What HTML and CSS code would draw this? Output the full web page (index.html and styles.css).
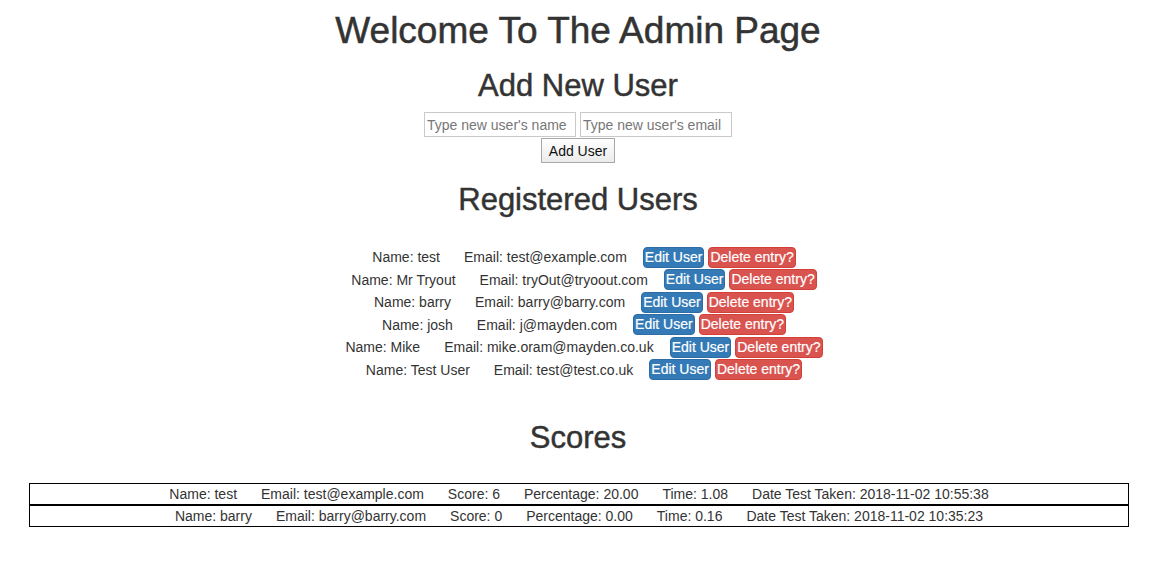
FILE: index.html
```html
<!DOCTYPE html>
<html lang="en">
<head>
<meta charset="utf-8">
<title>Admin Page</title>
<link rel="stylesheet" href="styles.css">
</head>
<body>
<main class="page">
  <h1 class="title">Welcome To The Admin Page</h1>

  <h2 class="heading heading-add">Add New User</h2>
  <form class="add-form">
    <div class="add-inputs">
      <input class="add-input" type="text" placeholder="Type new user's name">
      <input class="add-input" type="text" placeholder="Type new user's email">
    </div>
    <button class="add-btn" type="button">Add User</button>
  </form>

  <h2 class="heading heading-users">Registered Users</h2>
  <div class="users">
    <div class="user-row"><span class="field">Name: test</span><span class="field field-last">Email: test@example.com</span><button class="btn btn-edit" type="button">Edit User</button><button class="btn btn-delete" type="button">Delete entry?</button></div>
    <div class="user-row"><span class="field">Name: Mr Tryout</span><span class="field field-last">Email: tryOut@tryoout.com</span><button class="btn btn-edit" type="button">Edit User</button><button class="btn btn-delete" type="button">Delete entry?</button></div>
    <div class="user-row"><span class="field">Name: barry</span><span class="field field-last">Email: barry@barry.com</span><button class="btn btn-edit" type="button">Edit User</button><button class="btn btn-delete" type="button">Delete entry?</button></div>
    <div class="user-row"><span class="field">Name: josh</span><span class="field field-last">Email: j@mayden.com</span><button class="btn btn-edit" type="button">Edit User</button><button class="btn btn-delete" type="button">Delete entry?</button></div>
    <div class="user-row"><span class="field">Name: Mike</span><span class="field field-last">Email: mike.oram@mayden.co.uk</span><button class="btn btn-edit" type="button">Edit User</button><button class="btn btn-delete" type="button">Delete entry?</button></div>
    <div class="user-row"><span class="field">Name: Test User</span><span class="field field-last">Email: test@test.co.uk</span><button class="btn btn-edit" type="button">Edit User</button><button class="btn btn-delete" type="button">Delete entry?</button></div>
  </div>

  <h2 class="heading heading-scores">Scores</h2>
  <div class="scores">
    <div class="score-row"><span class="field">Name: test</span><span class="field">Email: test@example.com</span><span class="field">Score: 6</span><span class="field">Percentage: 20.00</span><span class="field">Time: 1.08</span><span class="field">Date Test Taken: 2018-11-02 10:55:38</span></div>
    <div class="score-row"><span class="field">Name: barry</span><span class="field">Email: barry@barry.com</span><span class="field">Score: 0</span><span class="field">Percentage: 0.00</span><span class="field">Time: 0.16</span><span class="field">Date Test Taken: 2018-11-02 10:35:23</span></div>
  </div>
</main>
</body>
</html>
```

FILE: styles.css
```css
html, body {
  margin: 0;
  padding: 0;
  background: #fff;
}

body {
  font-family: "Liberation Sans", Arial, Helvetica, sans-serif;
  font-size: 14px;
  line-height: 20px;
  color: #333;
}

.page {
  display: flex;
  flex-direction: column;
  align-items: center;
}

.title {
  margin: 11px 0 0;
  font-size: 37px;
  line-height: 40px;
  font-weight: normal;
  -webkit-text-stroke: 0.5px #333;
}

.heading {
  margin: 0;
  font-size: 31px;
  line-height: 33px;
  font-weight: normal;
  -webkit-text-stroke: 0.45px #333;
}

.heading-add {
  margin-top: 18px;
}

.add-form {
  display: flex;
  flex-direction: column;
  align-items: center;
  gap: 1px;
  margin-top: 10px;
}

.add-inputs {
  display: flex;
  gap: 4px;
}

.add-input {
  box-sizing: border-box;
  width: 152px;
  height: 25px;
  padding: 1px 2px;
  border: 1px solid #c9c9c9;
  font-family: inherit;
  font-size: 14px;
  color: #333;
  background: #fff;
}

.add-input::placeholder {
  color: #777;
}

.add-btn {
  box-sizing: border-box;
  height: 25px;
  width: 74px;
  padding: 0;
  border: 1px solid #a8a8a8;
  border-radius: 0;
  background: linear-gradient(#ffffff, #ebebeb);
  font-family: inherit;
  font-size: 14px;
  color: #111;
}

.heading-users {
  margin-top: 20px;
}

.users {
  margin-top: 30px;
  display: flex;
  flex-direction: column;
  align-items: center;
}

.user-row {
  height: 22.5px;
  display: flex;
  align-items: center;
  justify-content: center;
  white-space: nowrap;
}

.field {
  margin: 0 12px;
}

.btn {
  box-sizing: border-box;
  height: 21px;
  padding: 1px 1px;
  border: 1px solid transparent;
  border-radius: 4px;
  font-family: inherit;
  font-size: 14px;
  line-height: 17px;
  color: #fff;
  -webkit-text-stroke: 0.2px #fff;
}

.btn-edit {
  background: #337ab7;
  border-color: #2e6da4;
  margin-left: 4px;
}

.btn-delete {
  background: #d9534f;
  border-color: #d43f3a;
  margin-left: 4px;
}

.heading-scores {
  margin-top: 40px;
}

.scores {
  align-self: stretch;
  margin: 29px 27px 0 29px;
}

.score-row {
  border: 1px solid #000;
  height: 20px;
  display: flex;
  justify-content: center;
  align-items: center;
  white-space: nowrap;
}
```
